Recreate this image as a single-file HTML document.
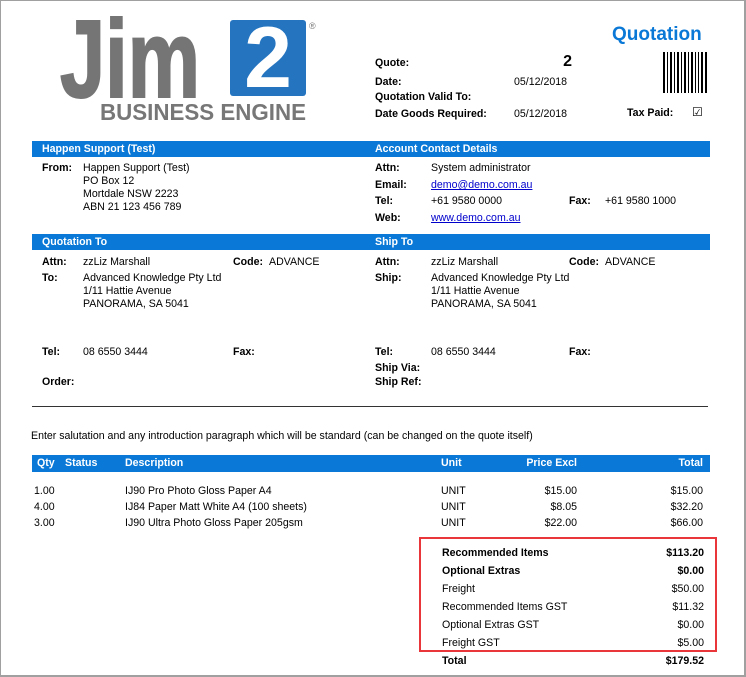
<!DOCTYPE html>
<html><head><meta charset="utf-8"><style>
*{margin:0;padding:0;box-sizing:border-box}
body{width:746px;height:677px;position:relative;background:#fff;font-family:"Liberation Sans",Tahoma,sans-serif;font-size:10.6px;color:#000;overflow:hidden}
.frame{position:absolute;left:0;top:0;width:746px;height:677px;border:1px solid #a0a0a0;border-bottom-width:2px;border-right-width:2px}
.t{position:absolute;line-height:13px;white-space:nowrap}
.b{font-weight:bold}
.r{text-align:right}
.bar{position:absolute;left:32px;width:678px;background:#0a78d6;color:#fff;font-weight:bold}
.bar .t{top:2px}
</style></head><body>
<div class="frame"></div>
<svg style="position:absolute;left:0;top:0" width="330" height="130">
<text x="60" y="97" font-family="Liberation Sans" font-weight="bold" font-size="110" fill="#757575" textLength="140" lengthAdjust="spacingAndGlyphs" stroke="#757575" stroke-width="2">Jim</text>
<rect x="230" y="20" width="76" height="76" rx="3" fill="#2474c0"/>
<text x="268" y="87" text-anchor="middle" font-family="Liberation Sans" font-weight="bold" font-size="86" fill="#fff">2</text>
<text x="309" y="29" font-family="Liberation Sans" font-size="9" fill="#777">®</text>
<text x="100" y="120" font-family="Liberation Sans" font-weight="bold" font-size="23" fill="#777" textLength="206" lengthAdjust="spacingAndGlyphs">BUSINESS ENGINE</text>
</svg>
<div class="t b" style="left:612px;top:25px;font-size:19px;line-height:20px;color:#0a78d6">Quotation</div>
<svg style="position:absolute;left:663px;top:52px" width="46" height="41">
<g fill="#000"><rect x="0" width="2" height="41"/><rect x="4" width="1" height="41"/><rect x="7" width="2" height="41"/><rect x="11" width="1" height="41"/><rect x="14" width="2" height="41"/><rect x="18" width="1" height="41"/><rect x="21" width="2" height="41"/><rect x="25" width="1" height="41"/><rect x="28" width="2" height="41"/><rect x="32" width="1" height="41"/><rect x="35" width="1" height="41"/><rect x="38" width="2" height="41"/><rect x="42" width="2" height="41"/></g></svg>
<div class="t b" style="left:375px;top:57px">Quote:</div>
<div class="t b" style="left:540px;top:54px;width:32px;text-align:right;font-size:16px;line-height:16px">2</div>
<div class="t b" style="left:375px;top:76px">Date:</div>
<div class="t" style="left:514px;top:76px">05/12/2018</div>
<div class="t b" style="left:375px;top:91px">Quotation Valid To:</div>
<div class="t b" style="left:375px;top:108px">Date Goods Required:</div>
<div class="t" style="left:514px;top:108px">05/12/2018</div>
<div class="t b" style="left:627px;top:107px">Tax Paid:</div>
<div class="t" style="left:692px;top:106px;font-size:12px">☑</div>

<div class="bar" style="top:141px;height:16px"><div class="t" style="left:10px">Happen Support (Test)</div><div class="t" style="left:343px">Account Contact Details</div></div>
<div class="t b" style="left:42px;top:162px">From:</div>
<div class="t" style="left:83px;top:162px">Happen Support (Test)<br>PO Box 12<br>Mortdale NSW 2223<br>ABN 21 123 456 789</div>
<div class="t b" style="left:375px;top:162px">Attn:</div><div class="t" style="left:431px;top:162px">System administrator</div>
<div class="t b" style="left:375px;top:179px">Email:</div><div class="t" style="left:431px;top:179px;color:#00c;text-decoration:underline">demo@demo.com.au</div>
<div class="t b" style="left:375px;top:195px">Tel:</div><div class="t" style="left:431px;top:195px">+61 9580 0000</div>
<div class="t b" style="left:569px;top:195px">Fax:</div><div class="t" style="left:605px;top:195px">+61 9580 1000</div>
<div class="t b" style="left:375px;top:212px">Web:</div><div class="t" style="left:431px;top:212px;color:#00c;text-decoration:underline">www.demo.com.au</div>

<div class="bar" style="top:234px;height:16px"><div class="t" style="left:10px">Quotation To</div><div class="t" style="left:343px">Ship To</div></div>
<div class="t b" style="left:42px;top:256px">Attn:</div><div class="t" style="left:83px;top:256px">zzLiz Marshall</div>
<div class="t b" style="left:233px;top:256px">Code:</div><div class="t" style="left:269px;top:256px">ADVANCE</div>
<div class="t b" style="left:42px;top:272px">To:</div>
<div class="t" style="left:83px;top:272px">Advanced Knowledge Pty Ltd<br>1/11 Hattie Avenue<br>PANORAMA, SA 5041</div>
<div class="t b" style="left:375px;top:256px">Attn:</div><div class="t" style="left:431px;top:256px">zzLiz Marshall</div>
<div class="t b" style="left:569px;top:256px">Code:</div><div class="t" style="left:605px;top:256px">ADVANCE</div>
<div class="t b" style="left:375px;top:272px">Ship:</div>
<div class="t" style="left:431px;top:272px">Advanced Knowledge Pty Ltd<br>1/11 Hattie Avenue<br>PANORAMA, SA 5041</div>
<div class="t b" style="left:42px;top:346px">Tel:</div><div class="t" style="left:83px;top:346px">08 6550 3444</div>
<div class="t b" style="left:233px;top:346px">Fax:</div>
<div class="t b" style="left:375px;top:346px">Tel:</div><div class="t" style="left:431px;top:346px">08 6550 3444</div>
<div class="t b" style="left:569px;top:346px">Fax:</div>
<div class="t b" style="left:375px;top:362px">Ship Via:</div>
<div class="t b" style="left:375px;top:376px">Ship Ref:</div>
<div class="t b" style="left:42px;top:376px">Order:</div>
<div style="position:absolute;left:32px;top:406px;width:676px;height:1px;background:#333"></div>
<div class="t" style="left:31px;top:430px">Enter salutation and any introduction paragraph which will be standard (can be changed on the quote itself)</div>

<div class="bar" style="top:455px;height:17px"><div class="t" style="left:5px">Qty</div><div class="t" style="left:33px">Status</div><div class="t" style="left:93px">Description</div><div class="t" style="left:409px">Unit</div><div class="t r" style="left:445px;width:100px">Price Excl</div><div class="t r" style="left:571px;width:100px">Total</div></div>
<div class="t" style="left:34px;top:483px;line-height:16px">1.00<br>4.00<br>3.00</div>
<div class="t" style="left:125px;top:483px;line-height:16px">IJ90 Pro Photo Gloss Paper A4<br>IJ84 Paper Matt White A4 (100 sheets)<br>IJ90 Ultra Photo Gloss Paper 205gsm</div>
<div class="t" style="left:441px;top:483px;line-height:16px">UNIT<br>UNIT<br>UNIT</div>
<div class="t r" style="left:477px;top:483px;width:100px;line-height:16px">$15.00<br>$8.05<br>$22.00</div>
<div class="t r" style="left:603px;top:483px;width:100px;line-height:16px">$15.00<br>$32.20<br>$66.00</div>

<div style="position:absolute;left:419px;top:537px;width:298px;height:115px;border:2px solid #e8363b"></div>
<div class="t" style="left:442px;top:544px;line-height:18px"><b>Recommended Items</b><br><b>Optional Extras</b><br>Freight<br>Recommended Items GST<br>Optional Extras GST<br>Freight GST<br><b>Total</b></div>
<div class="t r" style="left:584px;top:544px;width:120px;line-height:18px"><b>$113.20</b><br><b>$0.00</b><br>$50.00<br>$11.32<br>$0.00<br>$5.00<br><b>$179.52</b></div>
</body></html>
